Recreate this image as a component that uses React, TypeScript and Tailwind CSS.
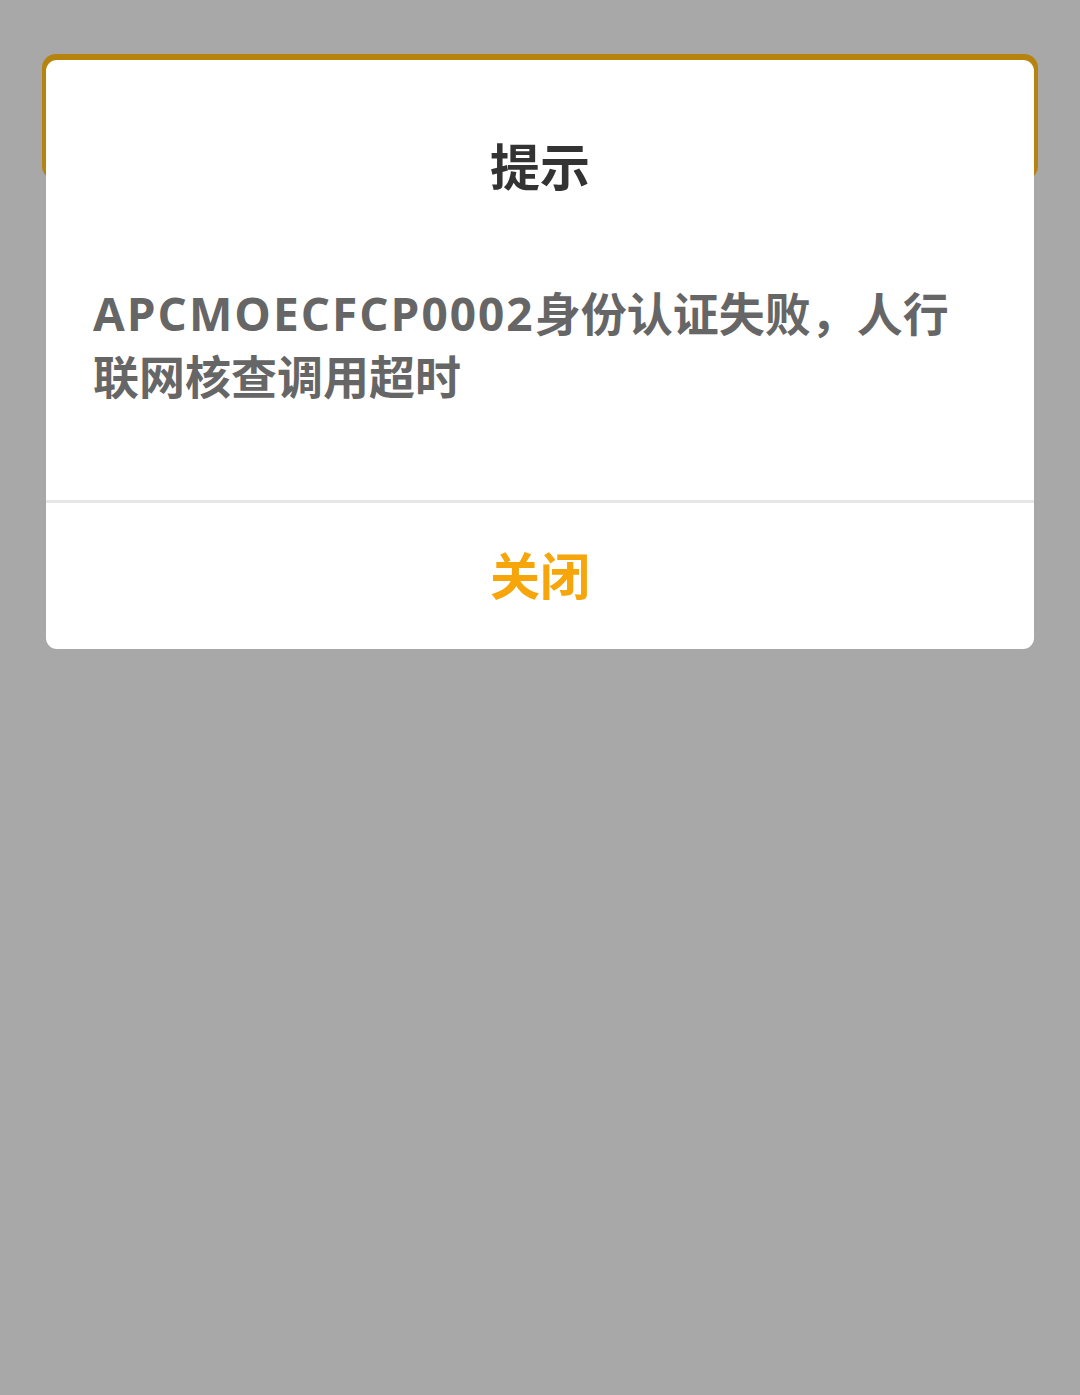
export default function App() {
  return (
    <div
      className="min-h-[1395px] w-full bg-[#a8a8a8] pt-[54px]"
      style={{ fontFamily: '"Open Sans", "Noto Sans CJK SC", sans-serif' }}
    >
      <div className="relative mx-[42px] pt-[6px]">
        <div className="absolute left-0 right-0 top-0 h-[126px] rounded-[14px] bg-[#b7830f]" />
        <div className="relative mx-[4px] overflow-hidden rounded-[11px] bg-white">
          <h2 className="pt-[72px] text-center text-[50px] font-bold leading-[70px] text-[#333333]">提示</h2>
          <p className="px-[47px] pb-[92px] pt-[80px] text-[46px] font-bold leading-[63px] text-[#666666]">
            <span className="tracking-[2px]">APCMOECFCP0002</span>身份认证失败，人行联网核查调用超时
          </p>
          <div className="h-[3px] bg-[#e6e6e6]" />
          <button
            type="button"
            className="flex h-[146px] w-full items-center justify-center text-[50px] font-bold text-[#f6a50b]"
          >
            关闭
          </button>
        </div>
      </div>
    </div>
  );
}
